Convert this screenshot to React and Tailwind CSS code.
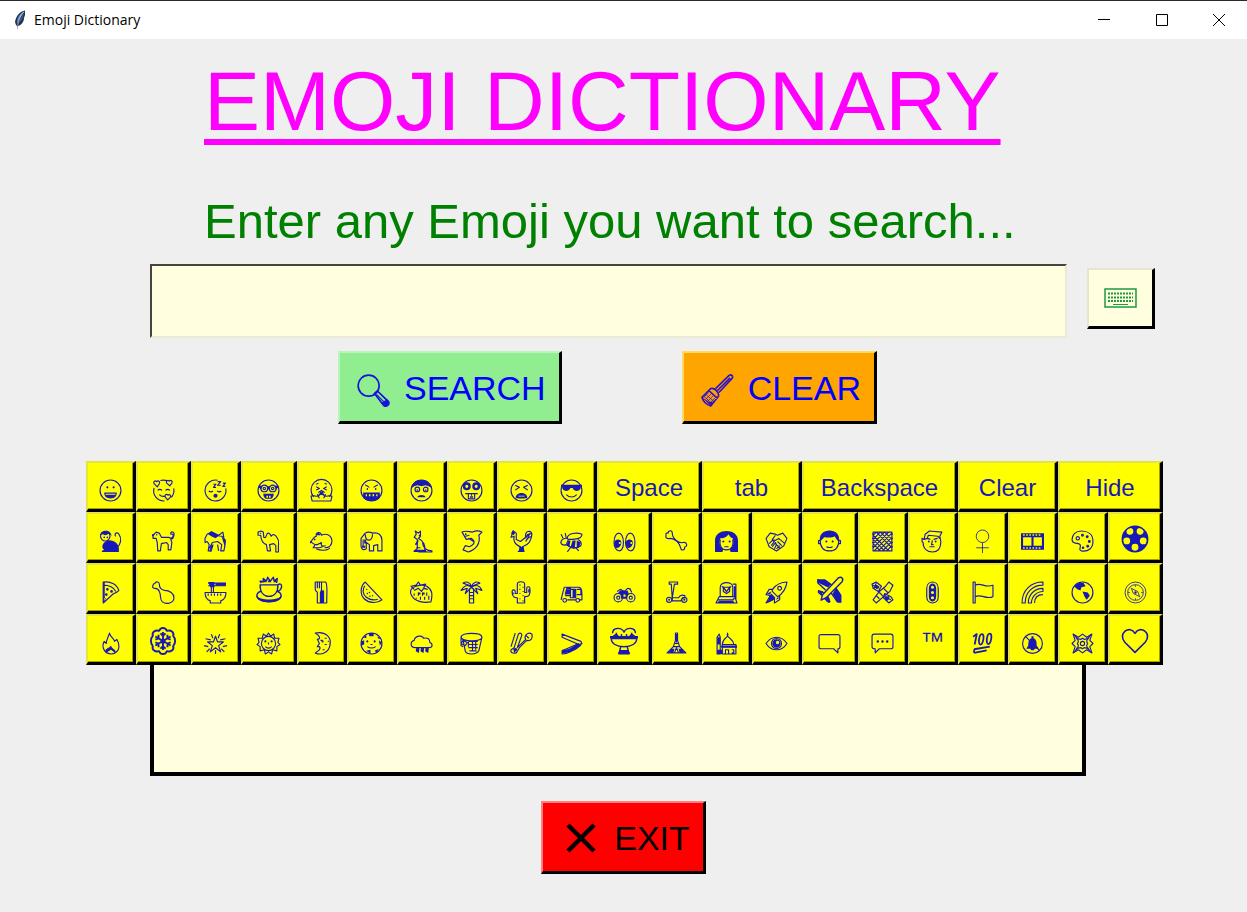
import React, { useState } from "react";

const c = (x, y, r) => `M${x - r} ${y}a${r} ${r} 0 1 0 ${2 * r} 0a${r} ${r} 0 1 0 ${-2 * r} 0z`;
const FACE = c(11, 11, 10);

// Each glyph: label, outlined path, filled path, and optionally large.
const rows = [
  [
    { name: "Grinning face", line: FACE + "M5.5 13.5h11c0 3-2.3 4.5-5.5 4.5s-5.5-1.5-5.5-4.5z", fill: "M6 15h10c-1 2-2.600 3-5 3s-4-1-5-3z" + c(8, 8, 1) + c(14, 8, 1) },
    { name: "Smiling face with hearts", line: "M2 8.500a9.700 9.700 0 0 0 10 12.500M8 1.500a10 10 0 0 1 7 .4M20.800 9a10 10 0 0 1-2.300 8.500M5 7.500L2 4.500c-1-2 1-3.500 2.500-2 1.500-1.500 3.500 0 2.500 2zM17 6.500l-3-2.500c-1-2 1-3.500 2.500-2 1.500-1.500 3.500 0 2.500 2zM15 20l-2.500-3c-.5-2 1.500-3 2.800-1.500 1.700-1.300 3.200.5 2.200 2zM5.500 11c1-1.500 3-1.500 4 0M13 11c1-1.500 3-1.500 4 0M7 15c1.500 1.500 3 2 5 1.500", fill: "" },
    { name: "Sleeping face", line: "M13 1.200A10 10 0 1 0 20.800 9M4.500 11.500c1.500 1 3 1 4 0M12.500 11.500c1.500 1 3 1 4 0M9 5h2.500L9 8h2.500M13 2.500h3L13 6h3M18 4h2.500L18 7h2.500", fill: c(11, 16, 2) },
    { name: "Nerd face", line: FACE + c(7, 9, 3.2) + c(15, 9, 3.2) + c(7, 9, 1.1) + c(15, 9, 1.1) + "M1.500 8h2.500M18 8h2.500", fill: "M1.500 6.500h4l-2 4zM20.500 6.500h-4l2 4zM9.500 7h3v3h-3zM6 14h10c0 3-2 5-3 5h-4c-1 0-3-2-3-5zM9 16v2h1.500v-2zM11.500 16v2h1.500v-2z" },
    { name: "Sneezing face", line: "M3.500 17A10 10 0 1 1 18.500 17M1 16.500c2-1.500 4 0 5.500 0s3.500-2.500 4.500-2.500 3 2.500 4.500 2.500 3.500-1.500 5.500 0l-1 4.500h-18zM6 7.500l3 1.500-3 1.500M16 7.500l-3 1.500 3 1.500M6 5l2-1M14 4l2 1M8 13l3-2 3 2M7 14.500l2 4M15 14.500l-2 4", fill: "M10 12h2l2 4-3-1-3 1z" },
    { name: "Face with symbols on mouth", line: FACE + "M5 5.500l4 2.500M17 5.500l-4 2.500M7 8.500v2M15 8.500v2", fill: "M3 13h16v5c-2 2-4 3-8 3s-6-1-8-3zM5.500 14.500v2h1.200v-2zM8.500 14.500v2h1.500v-2zM12 14.500v2h1.500v-2zM15.500 14.500v2h1.200v-2z" },
    { name: "Fearful face", line: FACE + c(7, 10, 2.2) + c(15, 10, 2.2), fill: "M1 9C2 4 6 1 11 1s9 3 10 8l-3-2-3-1-4 1-4-1-3 1z" + c(7, 10.5, 0.8) + c(15, 10.5, 0.8) + "M7 17.500c1-3 7-3 8 0z" },
    { name: "Money-mouth face", line: FACE + "M5 14h12M8 14v5h6v-5M11 14v2", fill: c(6.500, 7, 3.800) + c(15.500, 7, 3.800) + c(6.500, 7, 1.500) + c(15.500, 7, 1.500) + "M9.500 16.500h3V18h-3z" },
    { name: "Tired face", line: FACE + "M5 6l4 2-4 2.500M17 6l-4 2 4 2.500", fill: "M5.500 18c0-6 11-6 11 0 0 1-11 1-11 0zM8 16h6v.8H8z" },
    { name: "Smiling face with sunglasses", line: FACE + "M6 15c3 3 7 3 10 0", fill: "M1 5.500h20v2h-1c0 5-6.500 5-8 1h-2c-1.500 4-8 4-8-1H1z" },
    { text: "Space", span: "col-span-2" },
    { text: "tab", span: "col-span-2" },
    { text: "Backspace", span: "col-span-3" },
    { text: "Clear", span: "col-span-2" },
    { text: "Hide", span: "col-span-2" },
  ],
  [
    { name: "Monkey", line: "M17 17c4-3 5-9 2-13-2-3-5 0-3 2" + c(6, 6, 4.500), fill: "M1 6c0-7 11-7 11 0-1-2-2-2.500-3.500-2L6 5 3.500 4C2 4 1.500 5 1 6zM8 10c6-1 11 3 11 8v3H3c-1-1 1-2 3-2-3 0-4-4-1-7z" + c(5, 7, 0.8) + c(8, 7, 0.8) },
    { name: "Dog", line: "M1 5l3-3 3 1 2 4h7l2 1c3-1 3-5 0-4-1-3 4-3 3 1-.5 3-2 4-3 4l1 3-1 7h-2.500v-5L14 12l-5 1-1 7H5.500L5 12 4 8H1z", fill: c(4.5, 4.500, 0.7) + "M0 4h2v2H0z" },
    { name: "Horse", line: "M1 8l2-4 4-2 4 3 6 1 3 3v6l-1 5h-3l1-6-4-3-5 1-2 4v4H4l1-6-2-3-2 1zM14 5l4-3 1 5M9 14l-4 3M13 14l1 6", fill: "M4 4l3-3 8 4-4 3-4-2zM17 7l4 3-1 6-2-6zM7 14l2 1-2 6H6z" },
    { name: "Camel", line: "M1 2l3-1 2 1 .5 5c2 1 2-1 3-3s3-1 4 2c2-3 5-1 6 2 2 2 1 5 1 7v6h-2.500v-6l-2-2-4 1 1 6h-3L9 14c-3-1-5-3-5.500-9L1 5z", fill: c(3.5, 3.200, 0.6) },
    { name: "Mouse", line: "M1 11l3-4 2-1c-1-4 4-5 5-1 4-2 9-1 10 5 0 5-3 7-7 7M1 11c2 3 4 3 6 3l4-2c-1 3 1 4 4 3M5 14l-2 3h6l3-1M6 18c4 2 11 2 13-1", fill: c(4.5, 9, 0.8) + "M6 5c0-3 4-3 4 0zM0 10l2 2-2 1z" },
    { name: "Elephant", line: "M5 3c3-2 5-1 7 0 6-1 9 2 9 7v10h-4v-6l-4 1v5H9v-6l-3-2v6c-3 2-5 0-5-3V8zM5 4c0 7 7 8 7 0M3 9v7", fill: "M4 9h2v4H4zM2 15h3v2H2z" },
    { name: "Kangaroo", line: "M6 4l-1-3 3 2 2-2v5l-2 2c5 3 7 6 6 12H4l3-2V9L4 7zM12 12c0 5 4 8 9 8v1H8M8 10l-3 4M6 17h4", fill: "M8 5l2-1v3zM6 11l2 1-2 3zM5 19h10l1 2H3z" },
    { name: "Dolphin", line: "M2 2c4-2 7 0 10 0 4-2 7-1 9 0l-3 3c2 8-3 14-10 16l-5-2 2-4 4 1c5-2 6-5 2-8L6 9zM8 8l5 3M5 6l4-1", fill: c(5.500, 4, 0.8) },
    { name: "Rooster", line: "M2 4l1-3 3 2v6l4 2 5-4c-1-7 5-7 6-3-1 7-3 10-9 12l1 4H9l1-4C4 14 3 9 4 6L1 7zM15 8c1-4 5-5 6-4M15 11c2-4 4-5 6-4", fill: "M1 3L3 0l2 3-2 2zM9 16h4l1 5H7l2-2zM16 4l4-1-3 5z" },
    { name: "Honeybee", line: "M7 8c0-5 9-6 14-4 0 4-5 5-13 5-2-2-6-1-7 2s3 4 5 3l2-5M7 14c3 4 9 4 13 1 1-3-1-5-3-6M3 8L1 4M6 8L5 3M10 17l-3 4M15 17l3 3", fill: "M8 10h2l-1 6-3-1zM12 10h3l-1 8-4-1zM16 10l4 2-2 5-2-1z" },
    { name: "Eyes", line: "M1 12c0-12 9-12 9 0s-9 9-9 0zM12 12c0-12 9-12 9 0s-9 9-9 0z", fill: "M1 13c0-5 7-5 7-1s-4 7-6 4zM12 13c0-5 7-5 7-1s-4 7-6 4z" + c(6.500, 12.500, 1) + c(17.500, 12.500, 1) },
    { name: "Bone", line: "M1 5c-1-2 2-3 2-2 0-3 4-3 4 0 0 5 6 10 10 9 4-1 5 4 2 4 0 4-4 4-4 1-1-5-6-9-10-9-3 1-5-1-4-3z", fill: "" },
    { name: "Woman", line: "M5 9c-1 6 1 10 6 10s7-4 6-10M9 16h4", fill: "M0 21V10C0-2 22-2 22 10v11h-7l-1-2c4-3 4-7 3-11-2-1-3-2-4-4-2 3-5 4-8 4-1 4-1 8 3 11l-1 2z" + c(8, 11, 1) + c(14, 11, 1) },
    { name: "Handshake", line: "M1 8l4-5 5 1 2 1 5-2 4 5-3 7-7 5-7-4zM10 5L7 9l3 1 3-2 6 5M4 13l3-3 2 1-3 4M7 16l3-4 1 2-2 4M11 18l3-3M14 17l-4-4M16 15l-4-4", fill: "" },
    { name: "Boy", line: "M2 9c0 8 4 11 9 11s9-3 9-11M8 16c2 1 4 1 6 0M2 10H.5v3H3M20 10h1.500v3H19", fill: "M2 11C-1-3 23-3 20 11c-2-1-3-3-4-5-3 2-8 1-10 1z" + c(8, 11, 1) + c(14, 11, 1) },
    { name: "Fog", line: "M2 2h18v18H2zM2 5l3-3M2 9l7-7M2 13L13 2M2 17L17 2M3 20L20 3M7 20L20 7M11 20l9-9M15 20l5-5M5 2l15 15M9 2l11 11M13 2l7 7M2 5l15 15M2 9l11 11M2 13l7 7M1 4h2M1 8h2M1 12h2M1 16h2M19 4h2M19 8h2M19 12h2M19 16h2", fill: "" },
    { name: "Man", line: "M3 9l1-5 4-3 12 1-2 4 1 5c0 7-3 10-8 10s-9-3-9-9l-1-1V8zM3 9l3-1 1-3 9 1 3 3M8 16h5M6 8l3 1M12 9l4-1M11 10l-1 4h2", fill: c(7.500, 11, 0.9) + c(14, 11, 0.9) },
    { name: "Female sign", line: c(11, 6, 6) + "M11 12v10M5 17h12", fill: "", stroke: 0.8 },
    { name: "Film frames", line: "", fill: "M0 3h22v16H0zM2 7v8h8V7zM12 7v8h8V7zM2 4v1.500h1.500V4zM5 4v1.500h1.500V4zM8 4v1.500h1.500V4zM11 4v1.500h1.500V4zM14 4v1.500h1.500V4zM17 4v1.500h1.500V4zM2 16.500V18h1.500v-1.500zM5 16.500V18h1.500v-1.500zM8 16.500V18h1.500v-1.500zM11 16.500V18h1.500v-1.500zM14 16.500V18h1.500v-1.500zM17 16.500V18h1.500v-1.500z" },
    { name: "Artist palette", line: "M10 1C4 1 1 5 1 9c0 6 8 2 8 6 0 3-2 4 1 5 7 1 11-3 11-9C21 4 16 1 10 1z" + c(6.500, 8, 1.600), fill: c(11, 5, 1.400) + c(15.500, 6.500, 1.400) + c(17.500, 11, 1.400) + c(16, 15.500, 1.400) + c(11.500, 17, 1.200) },
    { name: "Soccer ball", line: FACE, fill: FACE + c(7, 5, 2.700) + c(15, 5, 2.700) + c(4.500, 12.500, 2.700) + c(17.500, 12.500, 2.700) + c(11, 17.500, 2.700), big: true },
  ],
  [
    { name: "Pizza", line: "M4 1c7-1 13 2 15 8-2 2-3 3-5 3L4 21zM4 4c6 0 10 2 12 6", fill: c(8, 8, 1.300) + c(12, 10, 1.300) + c(7, 13, 1.300) + c(5.500, 17, 0.9) + "M4 1h1.500v19H4z" },
    { name: "Poultry leg", line: "M1 4c0-2 2-1 2-2 1-2 4-1 4 1 0 3 1 5 5 6 5 0 9 3 9 7 0 5-7 7-11 4-3-3-1-6-3-10-1-3-3-3-4-3-2 0-3-1-2-3z", fill: "" },
    { name: "Steaming bowl", line: "M1 11h20c0 4-2 7-5 8v2H6v-2c-3-1-5-4-5-8zM4 2h17M4 4.500h17M7 2v9M9 2v9M4 12v2M7 12v2M10 12v2M13 12v2M16 12v2", fill: "M4 1h6v5H6zM11 2h10v2.500H11z" },
    { name: "Hot beverage", line: "M4 7c0 6 3 9 7 9s7-3 7-9zM18 7c4-3 4 5-1 5M4.500 12C-1 14 1 20 11 20s12-6 6.500-8M5 5.500L4 4l2.500.5L6.500 2 9 4l1-3 2 3 2.500-3 .5 3 2.500-2-.5 3.500", fill: "M1 15.500c3 4 17 4 20 0 0 7-20 7-20 0zM6 5l2-2.500 1 2.500zM10 5l1-2.500 2 2.500zM14.500 5l2-2.500v2.500z", big: true },
    { name: "Fork and knife", line: "M5 1v7c0 2 2 2 2 3v10h3V11c0-1 1-1 1-3V1zM7 1v6M9 1v6M11 1h4c2 2 1 7 1 20h-5z", fill: "M11 9h2.500v12H11z" },
    { name: "Watermelon", line: "M5 1C0 5 0 13 4 17s12 5 17 1zM4.500 4.500C2 9 3 13 6 15.500s7 3 11 2", fill: c(6.500, 8, 0.7) + c(9, 11, 0.7) + c(7, 12, 0.7) + c(12, 14, 0.7) + c(9.500, 14.500, 0.7) },
    { name: "Strawberry", line: "M6 5c-7 2-7 7-2 12 4 3 10 4 16 3 2-8 1-12-4-15-5-2-7-1-10 0zM4 8L1 5l5-1 2-3 2 3 5-1-2 4M4 9l4-2 3 3 2-3 4 1M4 12v2M8 11v3M12 11v3M16 11v3M6 16v1M10 15v3M14 15v3M18 14v4", fill: "M8 11h2v2H8zM12 11h2v2h-2z" },
    { name: "Palm tree", line: "M9 7v14h4V7M11 6C7 3 4 4 1 9l6-2-2 5 6-6 6 6-2-5 6 2c-2-5-6-6-10-3M11 5C9 1 6 0 3 2l8 3 8-3c-3-2-6-1-8 3M9 11h4M9 14h4M9 17h4", fill: "" },
    { name: "Cactus", line: "M7 21v-5H6c-3 0-4-3-4-6 0-2 3-2 3 0v2h2V3c0-3 7-3 7 0v8h2V7c0-2 3-2 3 0 1 6-1 8-4 8h-1v6zM9 4h1M12 6h1M9 8h1M12 10h1M9 12h1M12 14h1M9 17h1M12 19h1M3 11v2M18 8v3", fill: "" },
    { name: "Auto rickshaw", line: "M4 6h14c3 0 3 4 3 12h-2M1 18L4 6M7 18h8M5 13L6.500 7H10v7H5M10 8h5v8h-5zM16 8h4v5h-4" + c(4.500, 18.500, 1.800) + c(17, 18.500, 1.800), fill: "M6 8h4v5H5zM12 8h3v8h-3z" },
    { name: "Motorcycle", line: c(5, 16, 4) + c(17, 16, 4) + c(5, 16, 1.500) + c(17, 16, 1.500) + "M4 10l3-2 4 2 3-3 3 1M16 7l2 4", fill: "M7 9c3 0 4 1 7 0l1 3-2 5H8l-1-4-2-2zM10 13v2h2v-2z" },
    { name: "Kick scooter", line: "M4 1h8v2H9l-2 13h6c1-2 3-3 6-2v2c-3 0-3 2-4 3H7v-2L6 3H4z" + c(4, 18, 2.500) + c(18.500, 18, 2.500), fill: c(4, 18, 1) + c(18.500, 18, 1) },
    { name: "Station", line: "M5 15V6c0-6 12-6 12 0v9zM8 6h6v4l-3 2-3-2zM17 3h3v14h-3M4 15l-3 6h20l-2-6zM3 18h15", fill: "M6 5h2l3 4 3-4h2l-5 6zM4 19h13l2 2H2zM18 5h2v12l-2-2z" },
    { name: "Rocket", line: "M7 8c4-5 9-7 14-7-1 7-4 11-9 14l-5-5zM8 8H4l-3 5 5 1M14 14v4l-5 3v-5M5 14l-4 7 8-4" + c(14, 7, 1.800), fill: "M6 12l4 4-3 3-5 2 2-5zM2 12l4-2-1 3zM10 18l3-3v2z" },
    { name: "Airplane", line: "M17.500 1.500c2.500-1.500 4.500.5 3 3L8 17l-4 2 1-4zM12 7L1.500 3v2.500L7.500 11M15 10l4 10h-2.500L12 13.500M6 13l-4-1.500V13l2.500 2M9 16l1.500 4.500L9 20l-2-2.500", fill: "M1 2.500h6L12 6l-2.500 3L1 5zM16 9l4 6v6h-3l-4-7zM1.500 11.500l4 .5-1 3zM10 16l1.500 4.500-2 .5-2-3z", big: true },
    { name: "Satellite", line: "M1 3l4-2 5 4-3 5-5-3zM13 12l6 3 2 3-4 3-5-5zM14 5l3-4 4 3-3 6-6 5-7 6-3-3 6-8zM2 4l6 3M5 2L3 7M13 15l6 3M17 14l-3 5M12 7l4 4M8 11l4 4M5 14l3 3", fill: "M4 3l4 2-2 3-3-2zM14 14l4 2-2 3-3-2z" },
    { name: "Traffic light", line: "M5.500 7c0-8 11-8 11 0v8c0 8-11 8-11 0z", fill: "M7.500 7c0-6 7-6 7 0v8c0 6-7 6-7 0z" + c(11, 6, 1.500) + c(11, 11, 1.500) + c(11, 16, 1.500) },
    { name: "White flag", line: "M2 1h2v20H2zM4 4c6-3 9 3 17 0v11c-7 3-11-3-17 0z", fill: "" },
    { name: "Rainbow", line: "M1 21C1 9 9 1 21 1v3C11 4 4 11 4 21zM7 21c0-8 6-14 14-14v3c-6 0-11 5-11 11zM13 21c0-5 3-8 8-8", fill: "" },
    { name: "Globe", line: FACE, fill: "M4 4c2-2 5-3 8-2l2 3-4 1-1 3-3-1-3-3zM11 10l5 1 2 3-3 4-2-3z" },
    { name: "Compass", line: FACE + c(11, 11, 7.500) + "M7 7l6 3 2 5-6-3zM11 4v1.500M11 16.500V18M4 11h1.500M16.500 11H18", fill: c(11, 11, 1.200), stroke: 0.8 },
  ],
  [
    { name: "Fire", line: "M10 1c1 4 4 5 5 8l2-2c4 7 2 13-5 14C5 21 2 14 5 9l2 2c0-4 2-6 3-10z", fill: "M6.500 20c-2-4 3-4 5-7 1 4 6 4 4 7l-4-3z" },
    { name: "Snowflake", line: "M8 3c1-3 5-3 6 0 3-1 6 1 5 4 2 2 2 6 0 8 1 3-2 5-5 4-1 3-5 3-6 0-3 1-6-1-5-4-2-2-2-6 0-8-1-3 2-5 5-4zM11 4v14M5 7.500l12 7M17 7.500l-12 7M9 5l2 2 2-2M9 17l2-2 2 2M5 10l2.500-1V6M17 10l-2.500-1V6M5 12l2.500 1v3M17 12l-2.500 1v3", fill: c(11, 11, 2), stroke: 1.5, big: true },
    { name: "Glowing star", line: "M11 4l2 5.500h5.500L14 13l2 6-5-4-5 4 2-6-4.500-3.500H9zM7 2l1.500 4M15 2l-1.500 4M1.500 6.500l5 1M20.500 6.500l-5 1M0 13l4 1M22 13l-4 1M2.500 19l3-3M19.500 19l-3-3M11 17.500V21", fill: "" },
    { name: "Sun with face", line: c(11, 11, 6.800) + "M11 1l2 3 3-2 1 4h4l-1 4 2 2-3 2v4l-4-1-1 4-3-2-3 2-1-4-4 1v-4l-3-2 2-2-1-4h4l1-4 3 2zM8 14c2 2 4 2 6 0M11 10v2", fill: c(8, 9, 1) + c(14, 9, 1) },
    { name: "Last quarter moon face", line: "M5 1c10-2 16 4 14 12-1 6-8 10-14 7 3-2 6-4 4-6H7l2-3-2-4c4 0 2-4-2-6zM14 6h2M10 8h2M14 12h2M12 17h2M17 9h1", fill: c(12, 9, 1) },
    { name: "Full moon face", line: FACE + "M7 14c3 2 5 2 8 0M10 12h2", fill: c(7, 9, 1) + c(14, 9, 1) + "M8 1h5v3H9zM1 9l3-1v4l-3 1zM18 8l3 2-2 3zM6 18l4-1v4zM14 18l4-2-2 4zM3 5l3-2v3zM17 4l3 3-3-1z" },
    { name: "Cloud with rain", line: "M5 15c-5 0-5-6-1-7 1-5 8-5 9-2 4-1 6 1 6 4 3 1 3 5-1 5z", fill: "M6 15h3l-.5 5-3-1.500zM10.500 15h3l-.5 5-3-1.500zM15 15h3l-.5 5-3-1.500z" },
    { name: "Bucket", line: "M1 5c0-5 20-5 20 0s-20 4-20 0zM1 5v8l2 1M21 5l-3 13c-2 4-12 4-13 0L3 8M8 9v5M8 9h9M8 12h9M8 15h9M9 18h7M12 9v9M15 8v9M3 8l4 2-2 3-4-2z", fill: "" },
    { name: "Safety pin", line: "M4 15L8 2c2-2 4 0 3 2L7 15l8-8c-2-3 2-8 6-5 1 4-1 7-5 6l-7 7-3 5c-4 1-6-1-5-3zM15 3l3 3M5 1L1 14", fill: "M3 16l3-1 1 2-3 3z" },
    { name: "Razor", line: "M2 2l18 7 1 2-3 1L2 5zM18 11L2 18v3c7 0 12-4 16-10", fill: "M16 11l5 1c-4 5-12 9-19 8v-3c6 0 10-2 14-6z" },
    { name: "Fountain", line: "M2 5c0-5 7-5 9-1 2-4 9-4 9 1M1 9c0 4 4 6.500 10 6.500S21 13 21 9zM8.500 15.500L7 21h8l-1.500-5.500M5 7V4.500M9 7V5.500M13 7V5.500M17 7V4.500", fill: "M0 7h2l3-2 2 2 4 0 4 0 2-2 3 2h2v2H0zM8 18h6l2 3H6z", big: true },
    { name: "Tokyo tower", line: "M10 1h2v7l2 6 6 6H2l6-6 2-6zM8 14h6M9 11h4M7 16l-3 4M15 16l3 4M11 2v8M9 20l2-5 2 5", fill: "M7 16h2l-1 4H3zM13 16h2l4 4h-5zM10 2h2v4h-2z" },
    { name: "Mosque", line: "M2 21V5l2-3 1 3v16zM7 12c0-4 2-5 5-8 4 4 6 4 6 8zM7 12v9h13v-9zM12 4V1M10 21v-4h3v4M16 17h2v3h-2M6 14h14", fill: "M2 5h3v7H2zM6 13h15v2H6zM11 3l1-3 1 3zM2 17h5v4H2z" },
    { name: "Eye", line: "M1 11C6 3 16 3 21 11 16 19 6 19 1 11z" + c(11, 11, 4.800), fill: c(11, 11, 4) + c(12, 10, 1.600) },
    { name: "Left speech bubble", line: "M1 4.500c0-1.500 0-2 2-2h16c2 0 2 .5 2 2V14c0 2-1 2-2 2v4l-4-4H3c-2 0-2-1-2-2z", fill: "" },
    { name: "Speech balloon", line: "M1 4c0-2 1-2 2-2h16c2 0 2 1 2 2v10c0 2-1 2-2 2H8l-4 4v-4c-2 0-3 0-3-2z", fill: c(6.500, 9, 1.200) + c(11, 9, 1.200) + c(15.500, 9, 1.200) },
    { text: "™", span: "col-span-1" },
    { name: "Hundred points", line: "M2 4.500l3.500-2.500-2 10M10.500 2c-3 0-4 10-1.500 10s4.500-10 1.500-10zM18 1.500c-3 0-4 10-1.500 10s4.500-10 1.500-10zM3 16.500l15-2.500M3 20l12-2.500M3 16.500v3.500", fill: "", stroke: 1.7 },
    { name: "Bell with slash", line: c(11, 11, 9.500) + "M4 4l14 14", fill: "M10 4h2v2c3 1 3 4 3 7l2 3H5l2-3c0-3 0-6 3-7zM9 16h4c0 2-4 2-4 0z" },
    { name: "Collision", line: "M2 2l5 3 4-3 4 3 5-3-2 6 3 3-3 3 2 6-5-3-4 3-4-3-5 3 2-6-3-3 3-3zM6.500 6.500l3 .5L11 6l1.500 1 3-.5-.5 3 1 1.500-1 1.500.5 3-3-.5L11 16l-1.500-1-3 .5.5-3L6 11l1-1.500z" + c(11, 11, 2), fill: "M2 2l5 4-1 2zM20 2l-5 4 1 2zM2 20l5-4-1-2zM20 20l-5-4 1-2z" },
    { name: "White heart", line: "M11 20L3 12C-3 5 7-2 11 5 15-2 25 5 19 12z", fill: "", stroke: 1.3, big: true },
  ],
];

function Glyph({ item }) {
  return (
    <svg
      viewBox="0 0 22 22"
      className={item.big ? "size-7 shrink-0 overflow-visible" : "mt-1.5 size-[23px] shrink-0 overflow-visible"}
      fill="none"
      stroke="currentColor"
      strokeWidth={item.stroke || 1.1}
      strokeLinejoin="round"
      aria-hidden="true"
    >
      <path d={item.line} />
      <path d={item.fill} fill="currentColor" fillRule="evenodd" stroke="none" />
    </svg>
  );
}

const raised = "flex items-center justify-center border-t-2 border-l-2 border-r-3 border-b-3 border-r-black border-b-black";
const action = raised + " h-[73px] gap-3.5 pt-0.5 pr-[13px] text-[34px] leading-10";

function Key({ item, onPress }) {
  return (
    <button
      type="button"
      aria-label={item.name}
      onClick={() => onPress(item)}
      className={
        raised +
        " min-w-0 bg-[#ffff00] border-t-[#e3e348] border-l-[#e3e348] pt-[3px] text-2xl text-[#1818b8] shadow-[inset_-1px_-1px_0_#a0a000] " +
        (item.span || "")
      }
    >
      {item.text ? item.text : <Glyph item={item} />}
    </button>
  );
}

function Feather() {
  return (
    <svg viewBox="0 0 12 20" className="h-5 w-3" aria-hidden="true">
      <path d="M11 .5C6 1 2 6 1 12l1 3 1 1v4l1-4c4-1 6-5 6-8l1-3z" fill="#23334a" />
      <path d="M10 1.500C6 3 3 8 3 14c2-3 3-7 7-12z" fill="#6f9bd4" />
      <path d="M9.500 3c-1 3-3 6-5 10 3-2 5-5 5-10z" fill="#35639c" />
      <path d="M10 2C7 5 4 10 3.300 19" stroke="#c9d7e8" strokeWidth=".6" fill="none" />
    </svg>
  );
}

export default function App() {
  const [query, setQuery] = useState("");
  const [open, setOpen] = useState(true);

  const press = (item) => {
    if (item.text === "Hide") setOpen(false);
    else if (item.text === "Clear") setQuery("");
    else if (item.text === "Backspace") setQuery((q) => q.slice(0, -1));
    else if (item.text === "Space") setQuery((q) => q + " ");
    else if (item.text === "tab") setQuery((q) => q + "    ");
    else setQuery((q) => q + (item.text || item.name));
  };

  return (
    <div className="min-h-screen bg-[#efefef] font-['Liberation_Sans',Arial,sans-serif]">
      <header className="flex h-[39px] items-center border-t border-[#2b2b2b] bg-white pl-3.5">
        <Feather />
        <span className="ml-2 flex-1 font-['Open_Sans',sans-serif] text-sm text-black">Emoji Dictionary</span>
        <div className="flex self-stretch text-black">
          <button type="button" aria-label="Minimize" className="flex w-[58px] items-center justify-center">
            <svg viewBox="0 0 12 12" className="size-3" shapeRendering="crispEdges"><path d="M0 5h12v1H0z" /></svg>
          </button>
          <button type="button" aria-label="Maximize" className="flex w-[58px] items-center justify-center">
            <svg viewBox="0 0 12 12" className="size-3" fill="none" stroke="currentColor"><path d="M.5.5h11v11H.5z" /></svg>
          </button>
          <button type="button" aria-label="Close" className="flex w-14 items-center justify-center">
            <svg viewBox="0 0 12 12" className="size-3" fill="none" stroke="currentColor"><path d="M0 0l12 12M12 0L0 12" /></svg>
          </button>
        </div>
      </header>

      <main className="pt-5 pb-9">
        <div className="pl-[204px]">
          <h1 className="text-[84px] leading-[84px] whitespace-nowrap text-[#ff00ff] underline decoration-[6px] underline-offset-[9px]">
            EMOJI DICTIONARY
          </h1>
          <label htmlFor="query" className="mt-[50px] block text-[49px] leading-14 whitespace-nowrap text-[#008000]">
            Enter any Emoji you want to search...
          </label>
        </div>

        <div className="mt-[15px] flex items-start gap-5 pr-[92px] pl-[150px]">
          <input
            id="query"
            type="text"
            value={query}
            onChange={(e) => setQuery(e.target.value)}
            className="h-[74px] min-w-0 flex-1 border-2 border-t-[#45453e] border-r-[#e9e9d6] border-b-[#e9e9d6] border-l-[#45453e] bg-[#ffffe0] px-3 text-[49px] text-[#008000] outline-none"
          />
          <button
            type="button"
            aria-label="Toggle keyboard"
            onClick={() => setOpen(!open)}
            className={raised + " mt-1 h-[61px] w-[68px] border-t-[#e6e6cf] border-l-[#e6e6cf] bg-[#ffffe0] text-[#1c9a3c]"}
          >
            <svg viewBox="0 0 33 20" className="h-5 w-[33px]" fill="none" stroke="currentColor" aria-hidden="true">
              <path d="M1 1h31v18H1z" strokeWidth="1.500" />
              <path d="M4 5.500h25M4 9.500h25M4 13h25" strokeWidth="2" strokeDasharray="2 1" />
              <path d="M9 16.500h15" />
            </svg>
          </button>
        </div>

        <div className="mt-[13px] flex justify-center gap-[120px] pr-8">
          <button type="button" className={action + " border-t-[#b8f5b8] border-l-[#b8f5b8] bg-[#90ee90] pl-[17px] text-[#0000ff]"}>
            <svg viewBox="0 0 34 34" className="mt-1 size-[33px]" fill="none" stroke="#1414d8" strokeWidth="1.700" strokeLinejoin="round" aria-hidden="true">
              <circle cx="12" cy="12" r="10.800" />
              <path d="M18 20l3-2.500 11.500 11c1.500 3-2 6-5 4z" />
              <path d="M20 21l9 9M22.500 19l8 8" strokeWidth="1.200" />
              <path d="M24.500 30l6.500-4c3 2 1 8-3 7z" fill="#1414d8" stroke="none" />
            </svg>
            SEARCH
          </button>
          <button type="button" className={action + " border-t-[#ffdb60] border-l-[#ffdb60] bg-[#ffa500] pl-[17px] text-[#0000ff]"}>
            <svg viewBox="0 0 34 34" className="mt-1 size-[33px]" fill="none" stroke="#3210c8" strokeWidth="1.700" strokeLinejoin="round" aria-hidden="true">
              <path d="M15 15L29 1.500c2.500-1.500 4.500 1 3 3L18.500 19M1 24l9-9c4-1 9 4 8 8l-8 10c-4-1-8-5-9-9zM8 17l9 8M17 17L30 4" />
              <path d="M3 24l5-5M5 26l6-6M7 28l6-6M9 30l6-6M5 21l9 8M3 23l9 8" strokeWidth=".8" />
              <path d="M1 24l8 5 5-1-4 5z" fill="#3210c8" stroke="none" />
            </svg>
            CLEAR
          </button>
        </div>

        <div className="mt-[37px] h-[315px]">
          <div className="flex h-full flex-col">
            {open && (
              <div className="mr-[84px] ml-[86px] grid auto-rows-[51px] grid-cols-[50fr_55fr_50fr_56fr_50fr_50fr_50fr_50fr_50fr_50fr_55fr_50fr_50fr_50fr_56fr_50fr_50fr_50fr_50fr_50fr_55fr]">
                {rows.flat().map((item) => (
                  <Key key={item.name || item.text} item={item} onPress={press} />
                ))}
              </div>
            )}
            <output htmlFor="query" className="mr-[161px] ml-[150px] block flex-1 border-4 border-t-0 border-black bg-[#ffffe0]" />
          </div>
        </div>

        <div className="mt-[25px] flex justify-center">
          <button type="button" className={action + " border-t-[#ff8080] border-l-[#ff8080] bg-[#ff0000] pl-[23px] text-black"}>
            <svg viewBox="0 0 30 30" className="size-[30px]" fill="none" stroke="currentColor" strokeWidth="4.500" aria-hidden="true">
              <path d="M2 2l26 26M28 2L2 28" />
            </svg>
            <span className="ml-1">EXIT</span>
          </button>
        </div>
      </main>
    </div>
  );
}
